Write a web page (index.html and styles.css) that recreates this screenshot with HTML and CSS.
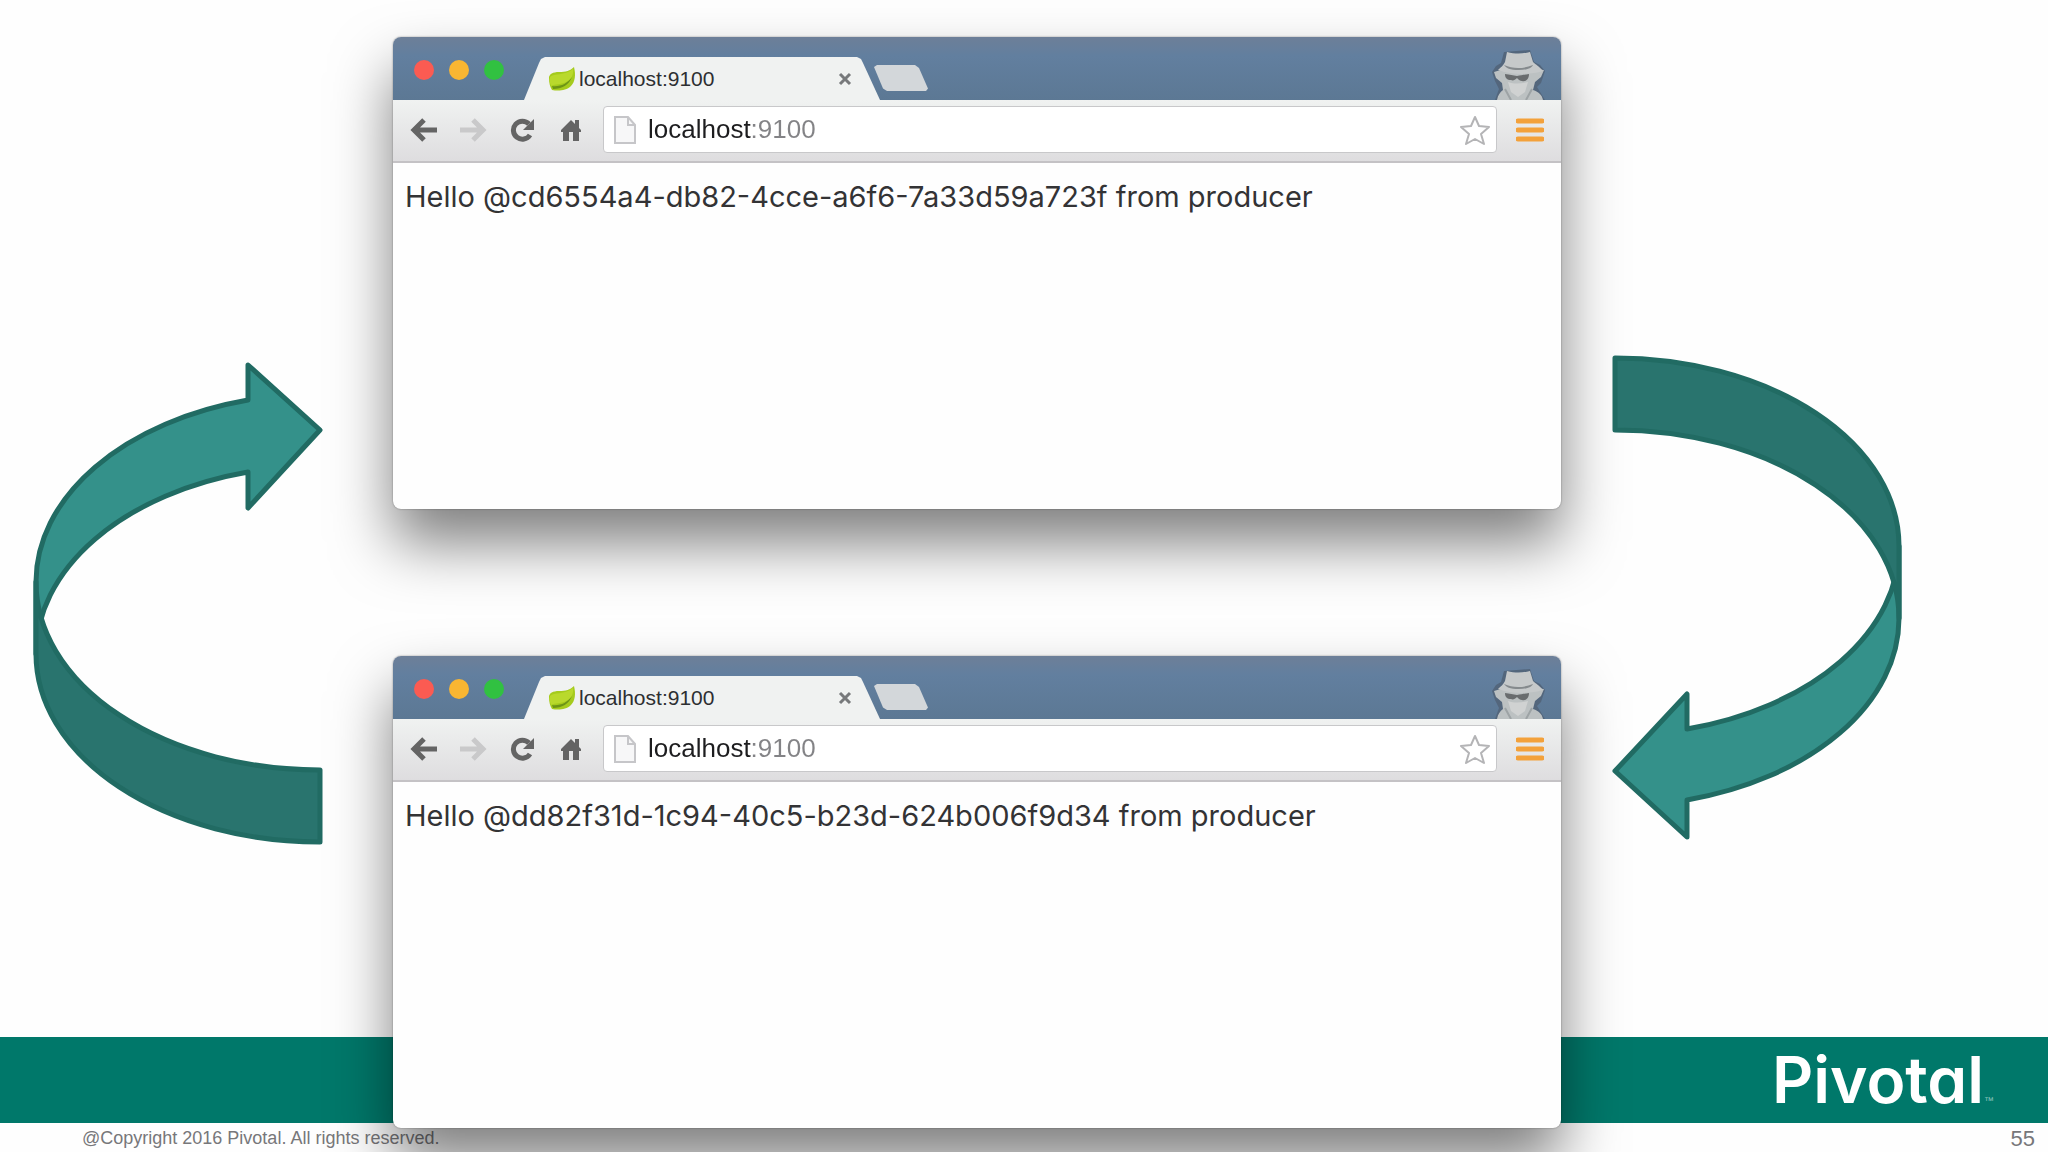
FILE: index.html
```html
<!DOCTYPE html>
<html lang="en">
<head>
    <meta charset="UTF-8">
    <meta name="viewport" content="width=device-width, initial-scale=1.0">
    <title>Hello from producer</title>
    <link rel="stylesheet" href="styles.css">
</head>
<body>
    <!-- shared icons -->
    <svg class="icon-defs" aria-hidden="true">
        <symbol id="icon-leaf" viewBox="0 0 28 26">
            <path d="M1 12C1 8 5 6 11 6c7 0 11-1 15-5 2 8 1 15-3 19-5 5-13 5-19 4C2 21 1 17 1 12z" fill="#a5cb1d"/>
            <path d="M2 11c4-4 14-1 23-8 1 7-3 12-9 14-6 2-10 1-13 3-1-3-2-6-1-9z" fill="#b9d92c"/>
            <path d="M4 20c8 1 15-2 20-9-3 8-10 12-19 12z" fill="#6d9416"/>
        </symbol>
        <symbol id="icon-back" viewBox="0 0 28 24">
            <path d="M27 12H4M14 2L4 12l10 10" fill="none" stroke="currentColor" stroke-width="5"/>
        </symbol>
        <symbol id="icon-forward" viewBox="0 0 28 24">
            <path d="M1 12h23M14 2l10 10-10 10" fill="none" stroke="currentColor" stroke-width="5"/>
        </symbol>
        <symbol id="icon-reload" viewBox="0 0 26 24">
            <path d="M20 6A9 9 0 1 0 21 17" fill="none" stroke="currentColor" stroke-width="5"/>
            <path d="M25 1v11H14z" fill="currentColor"/>
        </symbol>
        <symbol id="icon-home" viewBox="0 0 22 24">
            <path d="M1 12L11 2l4 4V2h4v8l2 2v2h-2v9h-6v-9H9v9H3v-9H1z" fill="currentColor"/>
        </symbol>
        <symbol id="icon-page" viewBox="0 0 22 28">
            <path d="M1 1h13l7 8v18H1z" fill="#f7f7f8" stroke="#c6c6c9" stroke-width="2"/>
            <path d="M14 1v8h7" fill="none" stroke="#c6c6c9" stroke-width="2"/>
        </symbol>
        <symbol id="icon-star" viewBox="0 0 32 32">
            <path d="M16 3l4 9 10 1-8 7 3 10-9-5-9 5 3-10-8-7 10-1z" fill="#fff" stroke="#b4b4b6" stroke-width="2" stroke-linejoin="round"/>
        </symbol>
        <symbol id="icon-menu" viewBox="0 0 28 24">
            <path d="M2 3h24M2 12h24M2 21h24" stroke="#f3a13b" stroke-width="5" stroke-linecap="round"/>
        </symbol>
        <symbol id="icon-close" viewBox="0 0 14 14">
            <path d="M2 2l10 10M12 2L2 12" stroke="#77797b" stroke-width="3"/>
        </symbol>
        <symbol id="icon-spy" viewBox="0 0 58 50">
            <path d="M4 50l4-11-4-8-3-9 4-6 5-3 3-11 26-2 4 12 6 3 5 6-4 12-4 4 8 13z" fill="#53667c"/>
            <path d="M6 50c1-5 3-8 6-10l-1-7-6-5-2-6 10-3h28l12 1-3 7-6 5-2 8c6 2 9 5 10 10z" fill="#bcc1c2"/>
            <path d="M7 20c3-3 5-4 7-8l2-10c8 2 15 2 23 0l3 10c3 3 6 4 10 9-13 4-32 4-45-1z" fill="#c6c9ca"/>
            <path d="M13 15c9 4 19 4 29 0-1 3-6 5-14 5-9 0-13-2-15-5z" fill="#858a8d"/>
            <path d="M14 24c5 1 8 1 12 2 4-1 7-1 12-2 0 5-3 8-7 7-2 0-4-2-5-3-2 2-4 3-6 2-4 0-6-2-6-6z" fill="#696c6e"/>
            <path d="M17 32c6 2 12 2 20 0l-3 10-7 5-7-5z" fill="#d0d2d2"/>
            <path d="M14 39l6 11M41 39l-6 11" fill="none" stroke="#9da3a5" stroke-width="2"/>
        </symbol>
    </svg>

    <div class="slide">
        <footer class="footer">
            <div class="brand-bar">
                <span class="brand">Pivotal</span><span class="brand-mark">™</span>
            </div>
            <div class="footer-line">
                <span class="copyright">@Copyright 2016 Pivotal. All rights reserved.</span>
                <span class="page-number">55</span>
            </div>
        </footer>

        <main class="stage">
            <svg class="arrow arrow-up" viewBox="0 0 290 483" aria-hidden="true">
                <path class="arrow-light" d="M3 220A284 188 0 0 1 215 38V3L287 68L215 146V110A284 188 0 0 0 3 292z"/>
                <path class="arrow-dark" d="M3 220A284 188 0 0 0 287 408V480A284 188 0 0 1 3 292z"/>
            </svg>

            <div class="windows">
                <section class="window">
                    <div class="title-bar">
                        <div class="lights">
                            <button class="light red" aria-label="Close window"></button>
                            <button class="light yellow" aria-label="Minimize window"></button>
                            <button class="light green" aria-label="Zoom window"></button>
                        </div>
                        <div class="tab">
                            <svg class="favicon"><use href="#icon-leaf"/></svg>
                            <span class="tab-title">localhost:9100</span>
                            <button class="tab-close" aria-label="Close tab"><svg><use href="#icon-close"/></svg></button>
                        </div>
                        <button class="new-tab" aria-label="New tab"></button>
                        <svg class="spy"><use href="#icon-spy"/></svg>
                    </div>
                    <div class="toolbar">
                        <nav class="nav-buttons">
                            <button aria-label="Back"><svg><use href="#icon-back"/></svg></button>
                            <button class="disabled" aria-label="Forward"><svg><use href="#icon-forward"/></svg></button>
                            <button aria-label="Reload"><svg><use href="#icon-reload"/></svg></button>
                            <button aria-label="Home"><svg><use href="#icon-home"/></svg></button>
                        </nav>
                        <div class="address">
                            <svg class="page-icon"><use href="#icon-page"/></svg>
                            <input type="text" aria-label="Address" value="localhost:9100">
                            <button class="star" aria-label="Bookmark"><svg><use href="#icon-star"/></svg></button>
                        </div>
                        <button class="menu" aria-label="Menu"><svg><use href="#icon-menu"/></svg></button>
                    </div>
                    <div class="page">
                        <p>Hello @cd6554a4-db82-4cce-a6f6-7a33d59a723f from producer</p>
                    </div>
                </section>

                <section class="window">
                    <div class="title-bar">
                        <div class="lights">
                            <button class="light red" aria-label="Close window"></button>
                            <button class="light yellow" aria-label="Minimize window"></button>
                            <button class="light green" aria-label="Zoom window"></button>
                        </div>
                        <div class="tab">
                            <svg class="favicon"><use href="#icon-leaf"/></svg>
                            <span class="tab-title">localhost:9100</span>
                            <button class="tab-close" aria-label="Close tab"><svg><use href="#icon-close"/></svg></button>
                        </div>
                        <button class="new-tab" aria-label="New tab"></button>
                        <svg class="spy"><use href="#icon-spy"/></svg>
                    </div>
                    <div class="toolbar">
                        <nav class="nav-buttons">
                            <button aria-label="Back"><svg><use href="#icon-back"/></svg></button>
                            <button class="disabled" aria-label="Forward"><svg><use href="#icon-forward"/></svg></button>
                            <button aria-label="Reload"><svg><use href="#icon-reload"/></svg></button>
                            <button aria-label="Home"><svg><use href="#icon-home"/></svg></button>
                        </nav>
                        <div class="address">
                            <svg class="page-icon"><use href="#icon-page"/></svg>
                            <input type="text" aria-label="Address" value="localhost:9100">
                            <button class="star" aria-label="Bookmark"><svg><use href="#icon-star"/></svg></button>
                        </div>
                        <button class="menu" aria-label="Menu"><svg><use href="#icon-menu"/></svg></button>
                    </div>
                    <div class="page">
                        <p>Hello @dd82f31d-1c94-40c5-b23d-624b006f9d34 from producer</p>
                    </div>
                </section>
            </div>

            <svg class="arrow arrow-down" viewBox="0 0 290 485" aria-hidden="true">
                <path class="arrow-light" d="M287 263A284 188 0 0 1 75 445V482L3 416L75 339V374A284 188 0 0 0 287 191z"/>
                <path class="arrow-dark" d="M3 3A284 188 0 0 1 287 191V263A284 188 0 0 0 3 75z"/>
            </svg>
        </main>
    </div>
</body>
</html>
```
FILE: styles.css
```css
* {
    box-sizing: border-box;
}
body {
    margin: 0;
    background-color: #fefefe;
    font-family: "Liberation Sans", Arial, sans-serif;
}
button {
    padding: 0;
    border: 0;
    background: none;
    color: inherit;
}
.icon-defs {
    display: none;
}

/* the footer and the stage share one cell, the windows lie over the footer */
.slide {
    display: grid;
    min-height: 100vh;
    overflow: hidden;
}
.footer, .stage {
    grid-area: 1 / 1;
}
.footer {
    align-self: end;
}
.brand-bar {
    display: flex;
    justify-content: flex-end;
    align-items: center;
    height: 86px;
    padding-right: 54px;
    background-color: #00786a;
    color: #ffffff;
}
.brand {
    font-family: Inter, sans-serif;
    font-feature-settings: "cv11";
    font-size: 64px;
    font-weight: 600;
    line-height: 80px;
}
.brand-mark {
    align-self: flex-end;
    font-size: 10px;
    line-height: 12px;
    margin-bottom: 16px;
    color: #8fc4bc;
}
.footer-line {
    display: flex;
    justify-content: space-between;
    align-items: center;
    height: 29px;
    padding: 2px 13px 0 82px;
    color: #77777a;
}
.copyright {
    font-size: 18px;
}
.page-number {
    font-size: 22px;
}

.stage {
    display: grid;
    grid-template-columns: 393fr 1168fr 487fr;
    align-items: start;
}

/* curved arrows */
.arrow {
    width: 290px;
    stroke: #216b63;
    stroke-width: 5px;
    stroke-linejoin: round;
}
.arrow-up {
    margin: 362px 0 0 33px;
}
.arrow-down {
    margin: 355px 0 0 51px;
}
.arrow-light {
    fill: #34918a;
}
.arrow-dark {
    fill: #29746e;
}

/* browser windows */
.windows {
    display: flex;
    flex-direction: column;
    gap: 147px;
    padding: 37px 0 24px;
}
.window {
    height: 472px;
    border-radius: 8px;
    background-color: #fefefe;
    box-shadow: 0 34px 60px rgba(0, 0, 0, 0.5), 0 0 2px rgba(0, 0, 0, 0.4);
}
.title-bar {
    display: flex;
    align-items: flex-end;
    height: 63px;
    border-radius: 8px 8px 0 0;
    background: linear-gradient(#6d7f98, #627f9f 30%, #5c7894);
}
.lights {
    display: flex;
    gap: 15px;
    width: 131px;
    height: 40px;
    padding-left: 21px;
}
.light {
    width: 20px;
    height: 20px;
    border-radius: 50%;
}
.red {
    background-color: #fb5b52;
}
.yellow {
    background-color: #f9b632;
}
.green {
    background-color: #31c141;
}
.tab {
    display: flex;
    align-items: center;
    width: 356px;
    height: 43px;
    padding: 0 28px 0 24px;
    background-color: #f0f2f1;
    clip-path: polygon(0 100%, 15px 6px, 17px 2px, 21px 0, 333px 0, 337px 2px, 339px 6px, 100% 100%);
}
.favicon {
    width: 28px;
    height: 26px;
}
.tab-title {
    flex: 1;
    padding-left: 3px;
    font-size: 21px;
    color: #2d2f31;
}
.tab-close, .tab-close svg {
    display: block;
    width: 14px;
    height: 14px;
}
.new-tab {
    width: 54px;
    height: 26px;
    margin: 0 0 9px -6px;
    background-color: #d3d7da;
    clip-path: polygon(0 2px, 3px 0, 41px 0, 45px 3px, 100% 90%, 52px 100%, 13px 100%, 9px 90%);
}
.spy {
    width: 58px;
    height: 50px;
    margin: 0 12px 0 auto;
}
.toolbar {
    display: flex;
    align-items: center;
    gap: 8px;
    height: 63px;
    padding: 0 7px 2px 6px;
    border-bottom: 2px solid #c4c2c5;
    background: linear-gradient(#f0f2f1, #dedddf);
    color: #646464;
}
.nav-buttons {
    display: flex;
}
.nav-buttons button, .menu {
    display: flex;
    justify-content: center;
    width: 49px;
}
.nav-buttons svg, .menu svg {
    width: 28px;
    height: 24px;
}
.nav-buttons .disabled {
    color: #c9c9ca;
}
.address {
    display: flex;
    align-items: center;
    flex: 1;
    height: 47px;
    padding: 0 5px 0 10px;
    border: 1px solid #c8c8ca;
    border-radius: 4px;
    background-color: #ffffff;
}
.page-icon {
    width: 22px;
    height: 28px;
}
.address input {
    flex: 1;
    min-width: 0;
    height: 40px;
    margin-left: 12px;
    padding: 0;
    border: 0;
    font-family: inherit;
    font-size: 26px;
    /* host dark, port grey */
    background: linear-gradient(90deg, #1d1d1f 103px, #838386 103px);
    -webkit-background-clip: text;
    background-clip: text;
    color: transparent;
}
.star, .star svg {
    display: block;
    width: 32px;
    height: 32px;
}
.page {
    padding: 16px 12px;
}
.page p {
    margin: 0;
    font-family: Inter, sans-serif;
    font-size: 29px;
    line-height: 36px;
    color: #333335;
}
```
